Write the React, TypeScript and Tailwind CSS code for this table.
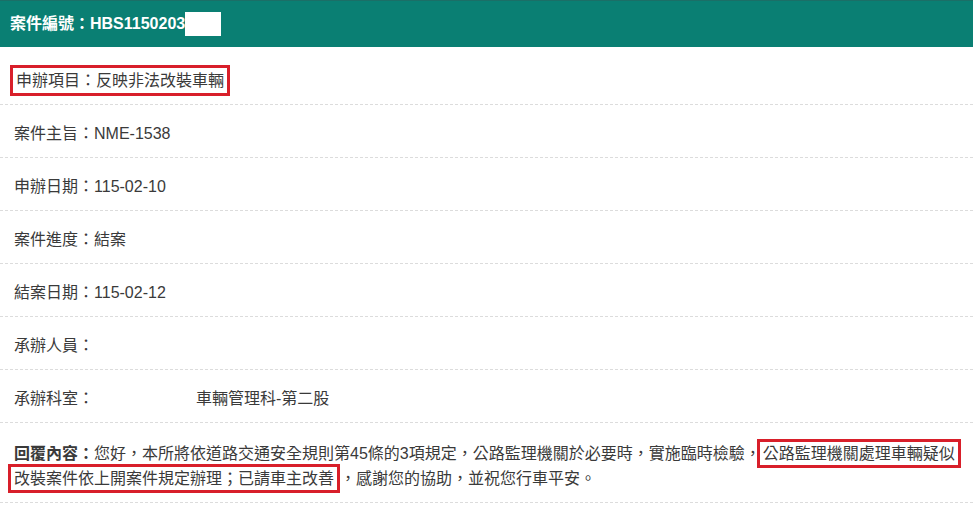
const FONT = "font-['Liberation_Sans','Noto_Sans_CJK_TC',sans-serif]";

type Field = { label: string; value: string };

const FIELDS: Field[] = [
  { label: '案件主旨：', value: 'NME-1538' },
  { label: '申辦日期：', value: '115-02-10' },
  { label: '案件進度：', value: '結案' },
  { label: '結案日期：', value: '115-02-12' },
  { label: '承辦人員：', value: '' },
];

function Row({ children, pt = 'pt-[16px]' }: { children: React.ReactNode; pt?: string }) {
  return (
    <div
      className={
        'border-b border-dashed border-[#dcdcdc] px-[14px] pb-[11px] text-[16px] leading-[25px] text-[#3a3a3a] ' +
        pt
      }
    >
      {children}
    </div>
  );
}

export default function App() {
  return (
    <div className={`${FONT} min-h-screen w-[973px] bg-white`}>
      <div className="flex h-[47px] items-center border-t border-[#1b6f67] bg-[#0a7f73] pl-[10px]">
        <span className="text-[16px] font-bold text-white">案件編號：HBS1150203</span>
        <span className="inline-block h-[24px] w-[36px] bg-white" />
      </div>

      <Row pt="pt-[21px]">
        <span className="ml-[-4px] border-[3px] border-[#d81f2a] px-[3px] py-[4px]">
          申辦項目：反映非法改裝車輛
        </span>
      </Row>

      {FIELDS.map((f) => (
        <Row key={f.label}>
          {f.label}
          {f.value}
        </Row>
      ))}

      <Row>
        <span className="inline-block w-[182px]">承辦科室：</span>
        車輛管理科-第二股
      </Row>

      <Row pt="pt-[18px]">
        <div className="whitespace-nowrap">
          <span className="font-bold">回覆內容：</span>
          您好，本所將依道路交通安全規則第45條的3項規定，公路監理機關於必要時，實施臨時檢驗，
          <span className="ml-[-4px] border-[3px] border-[#d81f2a] px-[3px] py-[3px]">公路監理機關處理車輛疑似</span>
        </div>
        <div className="whitespace-nowrap">
          <span className="ml-[-6px] border-[3px] border-[#d81f2a] px-[3px] py-[3px]">
            改裝案件依上開案件規定辦理；已請車主改善
          </span>
          ，感謝您的協助，並祝您行車平安。
        </div>
      </Row>
    </div>
  );
}
